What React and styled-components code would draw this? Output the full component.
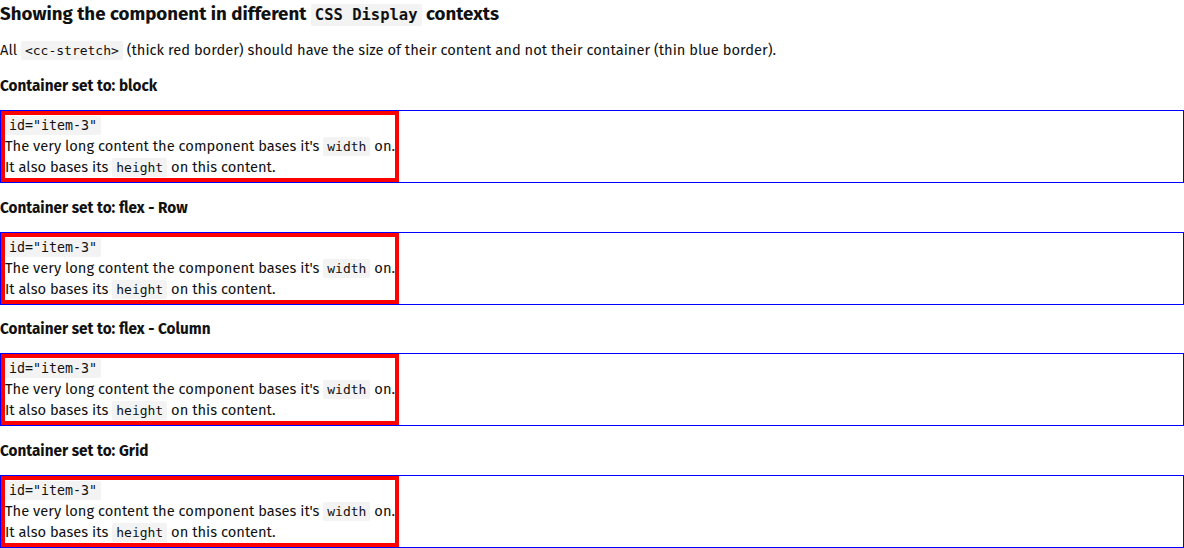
import React from "react";
import styled, { createGlobalStyle } from "styled-components";

const Global = createGlobalStyle`
  html, body { margin: 0; padding: 0; background: #fff; }
  body { font-family: "Fira Sans", Lato, "Noto Sans", sans-serif; color: #111; }
`;

const Page = styled.div`
  display: flex;
  flex-direction: column;
`;

const Title = styled.h2`
  margin: 0;
  font-size: 18.7px;
  line-height: 28px;
  font-weight: 700;
`;

const Para = styled.p`
  margin: 9.5px 0 0;
  font-size: 14.7px;
  line-height: 24px;
`;

const Label = styled.h4`
  margin: 12.5px 0 12px;
  font-size: 15.3px;
  line-height: 24px;
  font-weight: 700;
`;

const Code = styled.code`
  font-family: "DejaVu Sans Mono", monospace;
  font-size: ${(p) => p.$size || 13}px;
  line-height: 1;
  background: #f3f3f3;
  padding: 2px 4px;
  border-radius: 2px;
`;

const Container = styled.div`
  border: 1px solid blue;
  display: ${(p) => p.$display};
  flex-direction: ${(p) => p.$dir || "row"};
  align-items: flex-start;
`;

const Stretch = styled.div`
  width: fit-content;
  border: 4px solid red;
  font-size: 14.7px;
  line-height: 21px;
`;

const Line = styled.div`
  white-space: nowrap;
  height: 21px;
`;

function Item() {
  return (
    <Stretch>
      <Line>
        <Code $size={13.3}>id="item-3"</Code>
      </Line>
      <Line>
        The very long content the component bases it's <Code>width</Code> on.
      </Line>
      <Line>
        It also bases its <Code>height</Code> on this content.
      </Line>
    </Stretch>
  );
}

const sections = [
  { label: "block", display: "block" },
  { label: "flex - Row", display: "flex", dir: "row" },
  { label: "flex - Column", display: "flex", dir: "column" },
  { label: "Grid", display: "grid" },
];

export default function App() {
  return (
    <>
      <Global />
      <Page>
        <Title>
          Showing the component in different <Code $size={15.5}>CSS Display</Code> contexts
        </Title>
        <Para>
          All <Code>&lt;cc-stretch&gt;</Code> (thick red border) should have the size of their
          content and not their container (thin blue border).
        </Para>
        {sections.map((s) => (
          <React.Fragment key={s.label}>
            <Label>Container set to: {s.label}</Label>
            <Container $display={s.display} $dir={s.dir}>
              <Item />
            </Container>
          </React.Fragment>
        ))}
      </Page>
    </>
  );
}
